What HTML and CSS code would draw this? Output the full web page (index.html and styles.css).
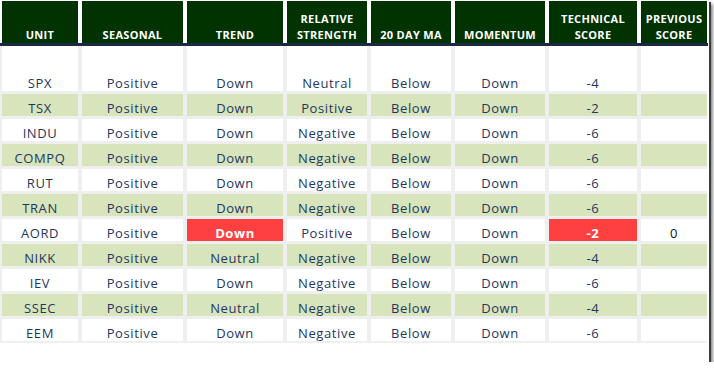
FILE: index.html
```html
<!DOCTYPE html>
<html>
<head>
<meta charset="utf-8">
<link rel="stylesheet" href="styles.css">
</head>
<body>
<div class="card">
  <div class="head">
    <div class="hc">UNIT</div>
    <div class="hc">SEASONAL</div>
    <div class="hc">TREND</div>
    <div class="hc">RELATIVE<br>STRENGTH</div>
    <div class="hc">20 DAY MA</div>
    <div class="hc">MOMENTUM</div>
    <div class="hc">TECHNICAL<br>SCORE</div>
    <div class="hc">PREVIOUS<br>SCORE</div>
  </div>
  <div class="rule"></div>
  <div class="body">
    <div class="row first"><div class="c">SPX</div><div class="c">Positive</div><div class="c">Down</div><div class="c">Neutral</div><div class="c">Below</div><div class="c">Down</div><div class="c">-4</div><div class="c"></div></div>
    <div class="row alt"><div class="c">TSX</div><div class="c">Positive</div><div class="c">Down</div><div class="c">Positive</div><div class="c">Below</div><div class="c">Down</div><div class="c">-2</div><div class="c"></div></div>
    <div class="row"><div class="c">INDU</div><div class="c">Positive</div><div class="c">Down</div><div class="c">Negative</div><div class="c">Below</div><div class="c">Down</div><div class="c">-6</div><div class="c"></div></div>
    <div class="row alt"><div class="c">COMPQ</div><div class="c">Positive</div><div class="c">Down</div><div class="c">Negative</div><div class="c">Below</div><div class="c">Down</div><div class="c">-6</div><div class="c"></div></div>
    <div class="row"><div class="c">RUT</div><div class="c">Positive</div><div class="c">Down</div><div class="c">Negative</div><div class="c">Below</div><div class="c">Down</div><div class="c">-6</div><div class="c"></div></div>
    <div class="row alt"><div class="c">TRAN</div><div class="c">Positive</div><div class="c">Down</div><div class="c">Negative</div><div class="c">Below</div><div class="c">Down</div><div class="c">-6</div><div class="c"></div></div>
    <div class="row"><div class="c">AORD</div><div class="c">Positive</div><div class="c hot">Down</div><div class="c">Positive</div><div class="c">Below</div><div class="c">Down</div><div class="c hot">-2</div><div class="c plain">0</div></div>
    <div class="row alt"><div class="c">NIKK</div><div class="c">Positive</div><div class="c">Neutral</div><div class="c">Negative</div><div class="c">Below</div><div class="c">Down</div><div class="c">-4</div><div class="c"></div></div>
    <div class="row"><div class="c">IEV</div><div class="c">Positive</div><div class="c">Down</div><div class="c">Negative</div><div class="c">Below</div><div class="c">Down</div><div class="c">-6</div><div class="c"></div></div>
    <div class="row alt"><div class="c">SSEC</div><div class="c">Positive</div><div class="c">Neutral</div><div class="c">Negative</div><div class="c">Below</div><div class="c">Down</div><div class="c">-4</div><div class="c"></div></div>
    <div class="row"><div class="c">EEM</div><div class="c">Positive</div><div class="c">Down</div><div class="c">Negative</div><div class="c">Below</div><div class="c">Down</div><div class="c">-6</div><div class="c"></div></div>
  </div>
</div>
</body>
</html>
```
FILE: styles.css
```css
html, body {
  margin: 0;
  padding: 0;
  background: #ffffff;
}
.card {
  width: 709px;
  height: 362px;
  background: #ffffff;
  box-shadow: 2px 2px 0 #3c3c3c, 4px 4px 3px rgba(0, 0, 0, 0.45);
  font-family: "Open Sans", "Liberation Sans", sans-serif;
  padding-top: 1px;
  box-sizing: border-box;
}
.head, .row {
  display: grid;
  grid-template-columns: 76px 101px 96px 80px 80px 90px 88px 66px;
  column-gap: 4px;
  margin-left: 2px;
}
.head {
  height: 42px;
}
.hc {
  background: #003300;
  color: #ffffff;
  font-weight: 700;
  font-size: 11px;
  line-height: 16px;
  letter-spacing: 0.3px;
  text-align: center;
  display: flex;
  align-items: flex-end;
  justify-content: center;
  padding-bottom: 0;
}
.rule {
  height: 3px;
  width: 708px;
  background: #1b2942;
}
.body {
  background: #efefef;
  display: flex;
  flex-direction: column;
  row-gap: 3px;
  padding-bottom: 2px;
  width: 707px;
}
.row {
  height: 22px;
}
.row.first {
  height: 45px;
}
.c {
  background: #ffffff;
  color: #1f3760;
  font-size: 13px;
  line-height: 16px;
  letter-spacing: 0.6px;
  text-align: center;
  display: flex;
  align-items: flex-end;
  justify-content: center;
  padding-bottom: 0;
}
.row.alt .c {
  background: #d8e4bc;
}
.c.hot {
  background: #ff4040;
  color: #ffffff;
  font-weight: 700;
}
.c.plain {
  color: #111111;
}
```
